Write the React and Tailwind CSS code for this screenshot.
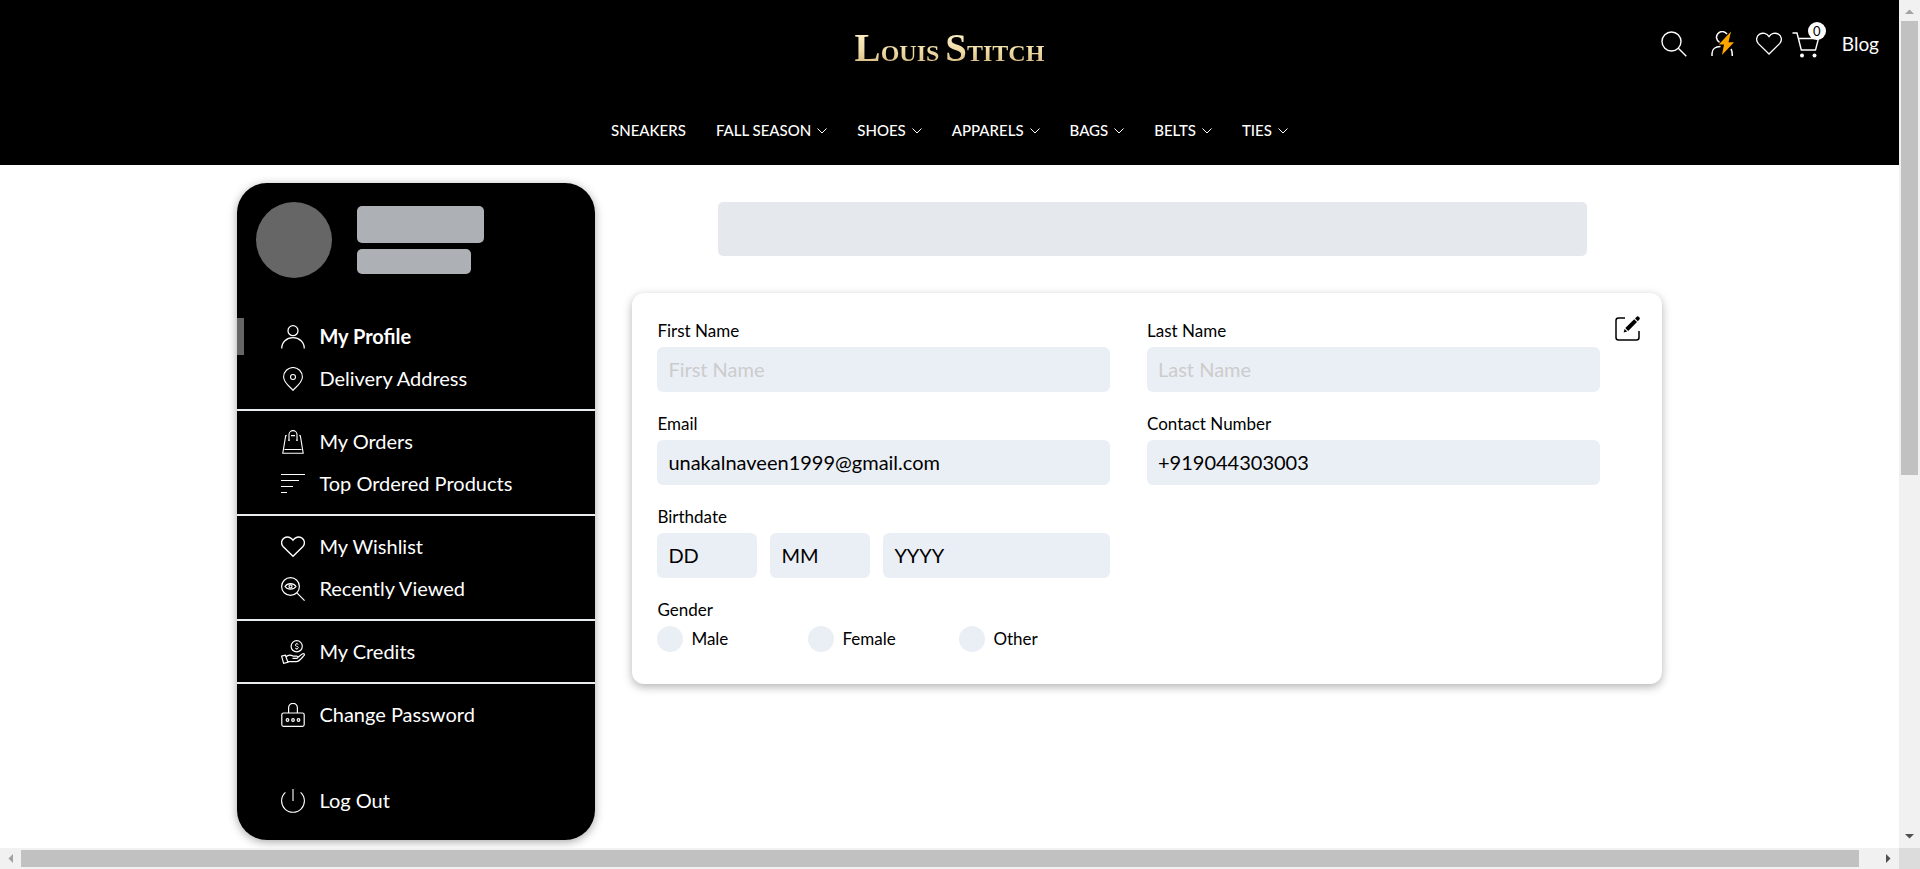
import React from "react";

function Icon({ children, className = "size-6", width = 1.2, viewBox = "0 0 24 24" }) {
  return (
    <svg
      viewBox={viewBox}
      className={`shrink-0 ${className}`}
      fill="none"
      stroke="currentColor"
      strokeWidth={width}
      aria-hidden="true"
    >
      {children}
    </svg>
  );
}

const HEART = "M12 21.2 2 11.4C-.4 8.600 .4 4.600 3.300 2.900 6.300 1.200 10 2.200 12 5.200 14 2.200 17.700 1.200 20.700 2.900 23.600 4.600 24.400 8.600 22 11.400Z";

const icons = {
  profile: (
    <Icon width={1.3}>
      <circle cx="12" cy="5.700" r="5" />
      <path d="M.7 23.500C.7 17.200 5.600 12.700 12 12.700S23.300 17.200 23.300 23.500" />
    </Icon>
  ),
  address: (
    <Icon width={1.1}>
      <path d="M12 23.300C9.500 20.300 2.600 15.500 2.600 9.900A9.400 9.400 0 0 1 21.400 9.900C21.400 15.500 14.500 20.300 12 23.300Z" />
      <circle cx="12" cy="10" r="2.500" />
    </Icon>
  ),
  orders: (
    <Icon width={1.1}>
      <path d="M4.500 5.600H5.700M18.300 5.600H19.500M10 5.600H14M4.700 5.600 1.800 23.200H22.200L19.300 5.600M3.500 19.500H20.500" />
      <path d="M8 10V4.600A4 4 0 0 1 16 4.600V10" />
      <path d="M7 10.300H9M15 10.300H17" />
    </Icon>
  ),
  top: (
    <Icon width={1.2}>
      <path d="M0 2.500H24M0 8.500H18M0 14.500H12M0 20.500H6" />
    </Icon>
  ),
  wish: (
    <Icon width={1.4}>
      <path d={HEART} />
    </Icon>
  ),
  viewed: (
    <Icon width={1.2}>
      <circle cx="9.500" cy="9.500" r="8.900" />
      <path d="m15.900 15.900 7.700 7.700M4 9.500C6.500 5.700 12.500 5.700 15 9.500 12.500 13 6.500 13 4 9.500Z" />
      <circle cx="9.500" cy="9.400" r="1.500" />
    </Icon>
  ),
  credits: (
    <Icon width={1.2}>
      <circle cx="15.700" cy="6.300" r="5.600" />
      <path
        d="M17.400 4.600C16.800 3.700 14.300 3.600 14.200 5 14.200 6.700 17.400 5.800 17.400 7.700 17.300 9 14.600 9 14 7.900M15.800 3V4M15.800 8.700V9.700"
        strokeWidth="0.9"
      />
      <path d="M.6 16.200 4.400 15.200 6.900 22.300 2.600 23.300ZM5 16.800C7.300 14.600 10 14.900 12 16.100H15.600C17.300 16.100 17.200 18.400 15.600 18.400H11.500M17 17.300 21.300 13.900C22.900 12.900 24.100 14.500 22.900 15.700 20.300 18.400 18.600 21.300 15.300 21.700H6.700" />
    </Icon>
  ),
  password: (
    <Icon width={1.2}>
      <rect x="0.800" y="10" width="22.400" height="13.400" rx="1.800" />
      <path d="M7.600 10V4.700A4.400 4.400 0 0 1 16.400 4.700V10" />
      <circle cx="6.500" cy="17" r="1.300" />
      <circle cx="12" cy="17" r="1.300" />
      <circle cx="17.500" cy="17" r="1.300" />
    </Icon>
  ),
  logout: (
    <Icon width={1.1}>
      <path d="M12 0V12M4.400 3.400A11.400 11.400 0 1 0 19.600 3.400" />
    </Icon>
  ),
};

const navItems = ["SNEAKERS", "FALL SEASON", "SHOES", "APPARELS", "BAGS", "BELTS", "TIES"];

function Header() {
  return (
    <header className="relative bg-black text-white">
      <div className="flex h-24 items-center justify-center pt-1">
        <a
          href="#home"
          className="bg-linear-to-b from-[#fff6cf] via-[#f0dca6] to-[#c9a468] bg-clip-text font-['Liberation_Serif',serif] text-[24px] leading-10 font-bold text-transparent"
        >
          <span className="text-[39px]">L</span>OUIS <span className="text-[39px]">S</span>TITCH
        </a>
      </div>
      <div className="absolute top-0 right-0 flex h-[88px] items-center pr-5">
        <button type="button" aria-label="Search" className="mr-6">
          <Icon className="size-[26px]" viewBox="0 0 26 26" width={1.4}>
            <circle cx="10.500" cy="10.500" r="9.500" />
            <path d="m17.300 17.300 8 8" />
          </Icon>
        </button>
        <button type="button" aria-label="Account" className="mr-[21px]">
          <Icon className="h-[26px] w-6" viewBox="0 0 24 26" width={1.5}>
            <path d="M8.500 11.300A5.700 5.700 0 1 1 16 3.200M1 25V22.500C1 18.500 4 15.500 9.500 15.500M20 18C21 19.500 21.300 22 21.300 25" />
            <path d="M20 .5 7.800 13.500H13L11 24 23 11.200H17.500Z" fill="#ffa500" stroke="none" />
          </Icon>
        </button>
        <button type="button" aria-label="Wishlist" className="mr-[10px]">
          <Icon className="size-[26px]" width={1.2}>
            <path d={HEART} />
          </Icon>
        </button>
        <button type="button" aria-label="Cart" className="relative mr-[22px]">
          <Icon className="size-7" viewBox="0 0 28 28" width={1.4}>
            <path d="M.5 3H5L9.300 20H23.500L26.500 8.500H6.500" />
            <circle cx="10" cy="25.500" r="2" fill="currentColor" stroke="none" />
            <circle cx="22.500" cy="25.500" r="2" fill="currentColor" stroke="none" />
          </Icon>
          <span className="absolute -top-2 -right-[6px] flex size-[18px] items-center justify-center rounded-full bg-white text-[13px] leading-none text-black">
            0
          </span>
        </button>
        <a href="#blog" className="text-[19px]">
          Blog
        </a>
      </div>
      <nav className="flex h-[69px] items-center justify-center gap-[30px] text-[15px] font-medium">
        {navItems.map((item, i) => (
          <a key={item} href={`#${item}`} className="flex items-center gap-[6px]">
            {item}
            {i > 0 && (
              <Icon className="h-[6px] w-[10px]" viewBox="0 0 10 6" width={1}>
                <path d="m.5.500 4.500 4.500 4.500-4.500" />
              </Icon>
            )}
          </a>
        ))}
      </nav>
    </header>
  );
}

function MenuItem({ icon, label, active }) {
  return (
    <a href={`#${icon}`} className="relative flex h-[42px] items-center gap-[14px] pl-11">
      {active && <span className="absolute top-[2px] left-0 h-[37px] w-[7px] bg-[#666]" />}
      {icons[icon]}
      <span className={active ? "pb-[2px] font-bold" : "pb-[2px]"}>{label}</span>
    </a>
  );
}

function Group({ children }) {
  return <div className="border-t-2 border-[#e9ecef] pt-[10px] pb-[9px]">{children}</div>;
}

function Sidebar() {
  return (
    <aside className="w-[358px] shrink-0 rounded-[30px] bg-black pb-[18px] text-[20px] text-white shadow-[0_2px_10px_rgba(0,0,0,0.35)]">
      <div className="flex h-[133px] gap-[25px] pt-[19px] pl-[19px]">
        <div className="size-[76px] rounded-full bg-[#666]" />
        <div className="flex flex-col gap-[6px] pt-1">
          <div className="h-[37px] w-[127px] rounded-[5px] bg-[#adb0b5]" />
          <div className="h-[25px] w-[114px] rounded-[5px] bg-[#adb0b5]" />
        </div>
      </div>
      <nav aria-label="Account">
        <div className="pb-[9px]">
          <MenuItem icon="profile" label="My Profile" active />
          <MenuItem icon="address" label="Delivery Address" />
        </div>
        <Group>
          <MenuItem icon="orders" label="My Orders" />
          <MenuItem icon="top" label="Top Ordered Products" />
        </Group>
        <Group>
          <MenuItem icon="wish" label="My Wishlist" />
          <MenuItem icon="viewed" label="Recently Viewed" />
        </Group>
        <Group>
          <MenuItem icon="credits" label="My Credits" />
        </Group>
        <div className="flex flex-col gap-11 border-t-2 border-[#e9ecef] pt-[10px]">
          <MenuItem icon="password" label="Change Password" />
          <MenuItem icon="logout" label="Log Out" />
        </div>
      </nav>
    </aside>
  );
}

const fieldClass =
  "block h-[45px] rounded-md bg-[#eaeff6] px-[11px] pb-[2px] text-[20px] text-black placeholder:text-[#ccc] outline-none";

function Field({ id, label, ...props }) {
  return (
    <div>
      <label htmlFor={id} className="mb-1 block">
        {label}
      </label>
      <input id={id} className={`w-full ${fieldClass}`} {...props} />
    </div>
  );
}

function DatePart({ label, name, className }) {
  return (
    <select aria-label={label} className={`appearance-none ${fieldClass} ${className}`}>
      <option>{name}</option>
    </select>
  );
}

function ProfileForm() {
  return (
    <section className="flex items-start gap-[15px] rounded-xl bg-white pt-[26px] pr-[22px] pb-8 pl-[25px] text-black shadow-[0_3px_10px_rgba(0,0,0,0.3)]">
      <form className="grid flex-1 grid-cols-2 gap-x-[37px] gap-y-5 text-[17px] leading-6">
        <Field id="first" label="First Name" placeholder="First Name" />
        <Field id="last" label="Last Name" placeholder="Last Name" />
        <Field id="email" label="Email" type="email" defaultValue="unakalnaveen1999@gmail.com" />
        <Field id="phone" label="Contact Number" type="tel" defaultValue="+919044303003" />
        <fieldset>
          <legend className="mb-1">Birthdate</legend>
          <div className="flex gap-[13px]">
            <DatePart label="Day" name="DD" className="w-[100px]" />
            <DatePart label="Month" name="MM" className="w-[100px]" />
            <DatePart label="Year" name="YYYY" className="flex-1" />
          </div>
        </fieldset>
        <fieldset className="col-start-1">
          <legend className="mb-1">Gender</legend>
          <div className="flex">
            {["Male", "Female", "Other"].map((g) => (
              <label key={g} className="flex w-[151px] items-center gap-2">
                <input
                  type="radio"
                  name="gender"
                  className="size-[26px] appearance-none rounded-full bg-[#eaeff6] checked:bg-black"
                />
                {g}
              </label>
            ))}
          </div>
        </fieldset>
      </form>
      <button type="button" aria-label="Edit profile" className="-mt-[3px]">
        <Icon className="size-[25px]" viewBox="0 0 25 25" width={1.5}>
          <path d="M10 2H3.500Q1 2 1 4.500V21.500Q1 24 3.500 24H21.500Q24 24 24 21.500V15" />
          <path d="M10.300 12 19.200 3.300 22 6.100 13.200 14.900ZM9.600 12.900 12.200 15.500 8.600 16.500ZM20 2.500 22 .5Q23 0 24 1 25.300 2.200 24.600 3.300L22.800 5.300Z" fill="currentColor" stroke="none" />
        </Icon>
      </button>
    </section>
  );
}

function Arrow({ d, className }) {
  return (
    <svg viewBox="0 0 21 21" className={`size-[21px] shrink-0 ${className}`} aria-hidden="true">
      <path d={d} fill="currentColor" />
    </svg>
  );
}

export default function App() {
  return (
    <div className="grid h-screen grid-cols-[minmax(0,1fr)_21px] grid-rows-[minmax(0,1fr)_21px] bg-white font-['Lato',sans-serif]">
      <div className="overflow-hidden">
        <Header />
        <main className="mx-auto flex w-3/4 items-start gap-[37px] pt-[18px]">
          <Sidebar />
          <div className="min-w-0 flex-1 pt-[19px]">
            <div className="mr-[75px] mb-[37px] ml-[86px] h-[54px] rounded-[5px] bg-[#e5e9ee]" />
            <ProfileForm />
          </div>
        </main>
      </div>
      <div className="flex flex-col bg-[#f1f1f1]">
        <Arrow d="M6 14h9l-4.500-4.500z" className="text-[#a3a3a3]" />
        <div className="flex-1">
          <div className="mx-[2px] h-[56.3%] bg-[#c1c1c1]" />
        </div>
        <Arrow d="M6 7h9l-4.500 4.500z" className="text-[#505050]" />
      </div>
      <div className="flex bg-[#f1f1f1]">
        <Arrow d="M13 6v9l-4.500-4.500z" className="text-[#a3a3a3]" />
        <div className="flex-1 py-[2px]">
          <div className="h-full w-[99%] bg-[#c1c1c1]" />
        </div>
        <Arrow d="M8 6v9l4.500-4.500z" className="text-[#505050]" />
      </div>
      <div className="bg-[#dcdcdc]" />
    </div>
  );
}
